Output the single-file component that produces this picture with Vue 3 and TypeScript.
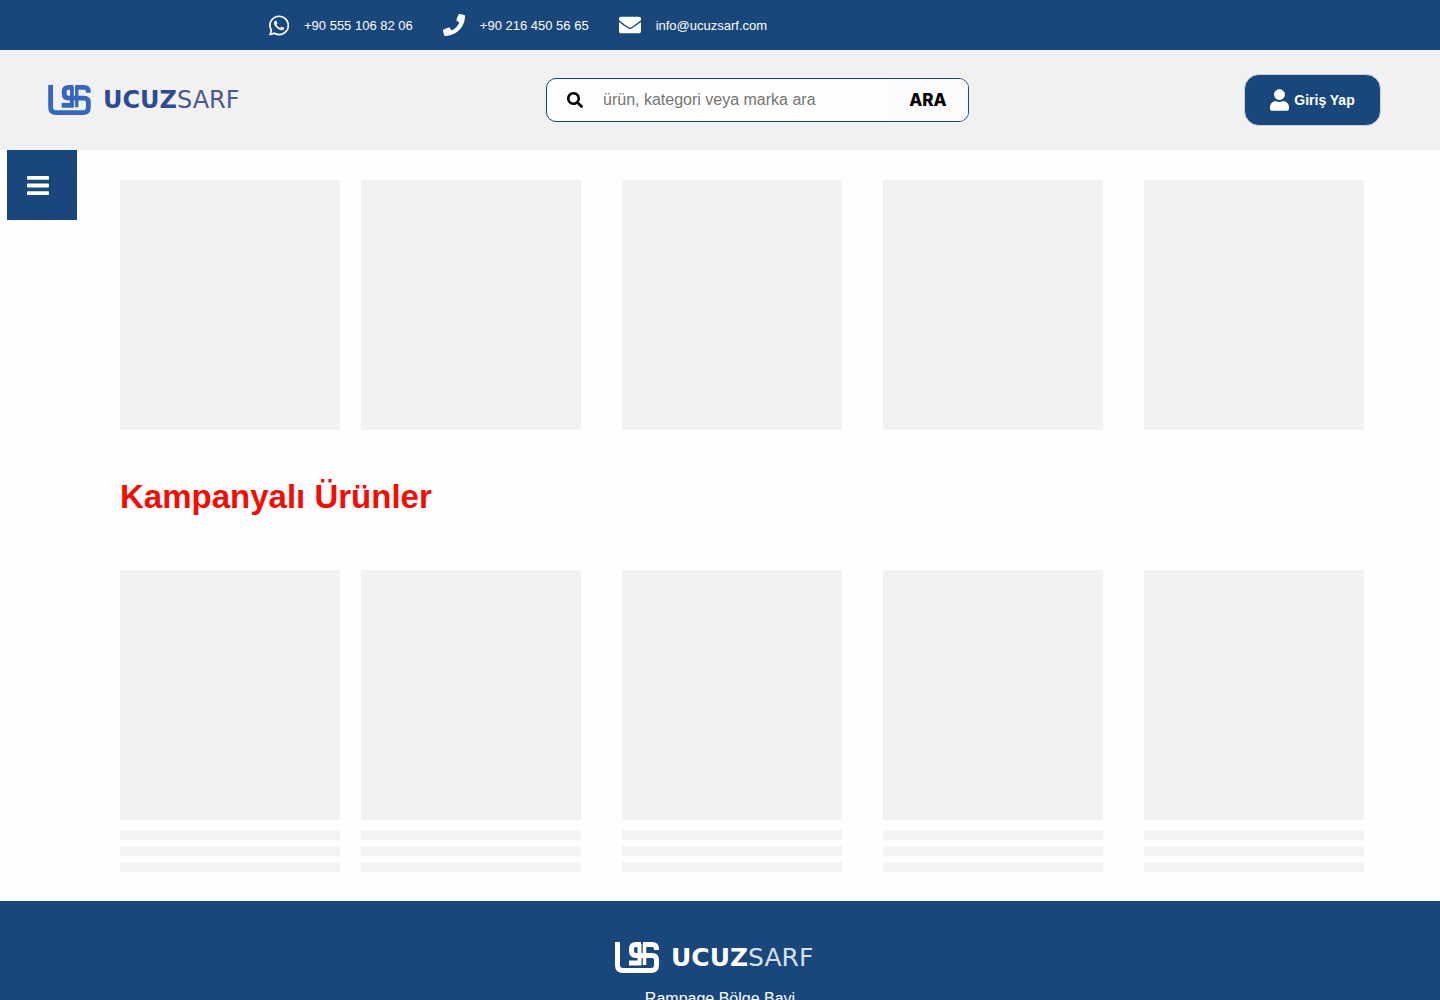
<script setup lang="ts">
import { ref } from 'vue'

const query = ref('')
const cards = [1, 2, 3, 4, 5]
</script>

<template>
  <div class="page">
    <div class="topbar">
      <a class="contact" href="https://wa.me/905551068206">
        <svg class="icon" viewBox="-24 0 448 512" width="22" height="23" aria-hidden="true">
          <path fill="currentColor" d="M380.900 97.100C339 55.100 283.200 32 223.900 32c-122.400 0-222 99.600-222 222 0 39.100 10.200 77.300 29.600 111L0 480l117.700-30.900c32.400 17.700 68.900 27 106.100 27h.1c122.300 0 224.100-99.600 224.100-222 0-59.300-25.200-115-67.100-157zm-157 341.600c-33.200 0-65.700-8.900-94-25.700l-6.700-4-69.800 18.300L72 359.200l-4.400-7c-18.500-29.400-28.200-63.300-28.200-98.200 0-101.700 82.800-184.500 184.600-184.500 49.300 0 95.600 19.200 130.400 54.100 34.800 34.900 56.200 81.200 56.100 130.500 0 101.800-84.900 184.600-186.600 184.600zm101.200-138.200c-5.500-2.800-32.800-16.200-37.900-18-5.100-1.900-8.800-2.800-12.500 2.800-3.700 5.600-14.300 18-17.600 21.800-3.200 3.700-6.500 4.200-12 1.400-32.600-16.300-54-29.100-75.500-66-5.700-9.800 5.700-9.100 16.300-30.300 1.800-3.700.9-6.900-.5-9.700-1.400-2.800-12.500-30.100-17.100-41.200-4.500-10.800-9.100-9.300-12.500-9.500-3.200-.2-6.900-.2-10.600-.2-3.700 0-9.700 1.400-14.800 6.900-5.100 5.600-19.400 19-19.400 46.300 0 27.300 19.900 53.700 22.600 57.400 2.800 3.700 39.100 59.700 94.800 83.800 35.200 15.200 49 16.500 66.600 13.900 10.700-1.600 32.800-13.400 37.400-26.400 4.600-13 4.600-24.100 3.200-26.400-1.300-2.500-5-3.900-10.500-6.600z" />
        </svg>
        <span>+90 555 106 82 06</span>
      </a>
      <a class="contact" href="tel:+902164505665">
        <svg class="icon" viewBox="0 0 512 512" width="22" height="22" aria-hidden="true">
          <path fill="currentColor" d="M493.400 24.600l-104-24c-11.300-2.600-22.900 3.300-27.500 13.900l-48 112c-4.200 9.800-1.400 21.300 6.900 28l60.600 49.600c-36 76.700-98.900 140.500-177.200 177.200l-49.600-60.600c-6.800-8.300-18.200-11.100-28-6.900l-112 48C3.900 366.500-2 378.100.6 389.400l24 104C27.100 504.200 36.700 512 48 512c256.100 0 464-207.500 464-464 0-11.200-7.700-20.900-18.600-23.400z" />
        </svg>
        <span>+90 216 450 56 65</span>
      </a>
      <a class="contact" href="mailto:info@ucuzsarf.com">
        <svg class="icon" viewBox="0 0 512 512" width="22" height="22" aria-hidden="true">
          <path fill="currentColor" d="M502.300 190.800c3.900-3.100 9.700-.2 9.700 4.700V400c0 26.500-21.500 48-48 48H48c-26.500 0-48-21.500-48-48V195.600c0-5 5.700-7.800 9.700-4.700 22.400 17.400 52.100 39.500 154.100 113.600 21.100 15.400 56.700 47.800 92.200 47.600 35.700.3 72-32.800 92.300-47.600 102-74.100 131.600-96.300 154-113.700zM256 320c23.200.4 56.600-29.200 73.400-41.400 132.700-96.300 142.800-104.700 173.400-128.700 5.800-4.500 9.200-11.500 9.200-18.900v-19c0-26.500-21.500-48-48-48H48c-26.500 0-48 21.500-48 48v19c0 7.400 3.400 14.300 9.200 18.900 30.600 23.900 40.700 32.400 173.400 128.700 16.800 12.200 50.200 41.800 73.400 41.400z" />
        </svg>
        <span>info@ucuzsarf.com</span>
      </a>
    </div>

    <header class="header">
      <a class="logo" href="/">
        <svg viewBox="0 0 44 31" width="43" height="30" fill="none" stroke="currentColor" stroke-width="5" aria-hidden="true">
          <path d="M2.500 0V23Q2.500 28.500 8 28.500H36Q41.500 28.500 41.500 23V18Q41.500 13.500 37 13.500H21Q16.500 13.500 16.500 9V7Q16.500 2.500 21 2.500H26" />
          <path d="M41.500 8V7Q41.500 2.500 37 2.500H28" />
          <path stroke-width="4" d="M24.500 2V23" />
          <path stroke-width="3.500" d="M29.500 2V23" />
          <path d="M14 21H26" />
        </svg>
        <span class="wordmark"><b>UCUZ</b>SARF</span>
      </a>
      <form class="search" role="search" @submit.prevent>
        <label class="search-label" for="query" aria-label="Ara">
          <svg viewBox="0 0 512 512" width="16" height="16" aria-hidden="true">
            <path fill="currentColor" d="M505 442.700L405.300 343c-4.500-4.500-10.600-7-17-7H372c27.600-35.300 44-79.700 44-128C416 93.100 322.900 0 208 0S0 93.100 0 208s93.100 208 208 208c48.300 0 92.700-16.400 128-44v16.300c0 6.400 2.500 12.500 7 17l99.700 99.700c9.400 9.400 24.600 9.400 33.900 0l28.300-28.300c9.400-9.400 9.400-24.600.1-34zM208 336c-70.700 0-128-57.200-128-128 0-70.700 57.200-128 128-128 70.700 0 128 57.200 128 128 0 70.700-57.200 128-128 128z" />
          </svg>
        </label>
        <input id="query" v-model="query" type="text" placeholder="ürün, kategori veya marka ara">
        <button type="submit">ARA</button>
      </form>
      <button class="login" type="button">
        <svg viewBox="0 0 448 512" width="19" height="22" aria-hidden="true">
          <path fill="currentColor" d="M224 256c70.700 0 128-57.300 128-128S294.700 0 224 0 96 57.300 96 128s57.300 128 128 128zm89.600 32h-16.700c-22.200 10.200-46.900 16-72.900 16s-50.600-5.800-72.900-16h-16.700C60.200 288 0 348.200 0 422.400V464c0 26.500 21.500 48 48 48h352c26.500 0 48-21.500 48-48v-41.600c0-74.200-60.200-134.400-134.400-134.400z" />
        </svg>
        <span>Giriş Yap</span>
      </button>
    </header>

    <div class="body">
      <button class="menu" type="button" aria-label="Menü">
        <svg viewBox="0 0 22 20" width="22" height="20" fill="currentColor" aria-hidden="true">
          <rect y="1" width="22" height="3.800" rx="0.800" />
          <rect y="8.600" width="22" height="3.800" rx="0.800" />
          <rect y="16.200" width="22" height="3.800" rx="0.800" />
        </svg>
      </button>
      <main class="content">
        <section class="row">
          <div v-for="n in cards" :key="n" class="card">
            <div class="picture"></div>
          </div>
        </section>
        <h1>Kampanyalı Ürünler</h1>
        <section class="row">
          <div v-for="n in cards" :key="n" class="card">
            <div class="picture"></div>
            <div class="line"></div>
            <div class="line"></div>
            <div class="line"></div>
          </div>
        </section>
      </main>
    </div>

    <footer class="footer">
      <a class="logo light" href="/">
        <svg viewBox="0 0 44 31" width="44" height="31" fill="none" stroke="currentColor" stroke-width="5" aria-hidden="true">
          <path d="M2.500 0V23Q2.500 28.500 8 28.500H36Q41.500 28.500 41.500 23V18Q41.500 13.500 37 13.500H21Q16.500 13.500 16.500 9V7Q16.500 2.500 21 2.500H26" />
          <path d="M41.500 8V7Q41.500 2.500 37 2.500H28" />
          <path stroke-width="4" d="M24.500 2V23" />
          <path stroke-width="3.500" d="M29.500 2V23" />
          <path d="M14 21H26" />
        </svg>
        <span class="wordmark"><b>UCUZ</b>SARF</span>
      </a>
      <p>Rampage Bölge Bayi</p>
    </footer>
  </div>
</template>

<style>
body {
  margin: 0;
}
</style>

<style scoped>
.page {
  font-family: "Liberation Sans", Arial, sans-serif;
  background: #fefefe;
}

.page * {
  box-sizing: border-box;
}

button {
  padding: 0;
  border: 0;
  font-family: inherit;
  cursor: pointer;
}

.topbar {
  display: flex;
  align-items: center;
  gap: 30px;
  height: 50px;
  padding-left: 267px;
  background: #19477b;
}

.contact {
  display: flex;
  align-items: center;
  gap: 15px;
  color: #fff;
  font-size: 13px;
  text-decoration: none;
}

.icon {
  overflow: visible;
}

.header {
  display: flex;
  align-items: center;
  justify-content: space-between;
  height: 100px;
  padding: 0 59px 0 48px;
  background: #f1f1f1;
}

.logo {
  display: flex;
  align-items: center;
  gap: 12px;
  width: 223px;
  color: #3766bd;
  text-decoration: none;
}

.wordmark {
  color: #4a5a90;
  font-family: "DejaVu Sans", sans-serif;
  font-size: 24px;
  font-weight: 400;
  line-height: 30px;
}

.wordmark b {
  color: #2c4b92;
  font-weight: 700;
}

.light {
  width: 210px;
  color: #fff;
}

.light .wordmark {
  color: #d5e0f0;
  font-size: 25px;
}

.light .wordmark b {
  color: #fff;
}

.search {
  display: flex;
  align-items: stretch;
  width: 423px;
  height: 44px;
  overflow: hidden;
  border: 1px solid #19477b;
  border-radius: 10px;
  background: #fefefe;
}

.search-label {
  display: flex;
  align-items: center;
  justify-content: center;
  width: 56px;
  color: #000;
}

.search input {
  flex: 1;
  min-width: 0;
  padding: 0;
  border: 0;
  outline: 0;
  background: transparent;
  font-family: inherit;
  font-size: 16px;
}

.search input::placeholder {
  color: #757575;
}

.search button {
  width: 80px;
  background: #fcfcfc;
  color: #000;
  font-family: Inter, sans-serif;
  font-size: 17px;
  font-weight: 800;
}

.login {
  display: flex;
  align-items: center;
  justify-content: center;
  gap: 5px;
  width: 137px;
  height: 52px;
  border: 1px solid #c9d3df;
  border-radius: 15px;
  background: #19477b;
  color: #fff;
  font-size: 14px;
  font-weight: 700;
}

.body {
  display: flex;
  align-items: flex-start;
  padding-left: 7px;
}

.menu {
  display: flex;
  align-items: center;
  width: 70px;
  height: 70px;
  padding-left: 20px;
  background: #19477b;
  color: #fff;
}

.content {
  flex: 1;
  padding: 30px 76px 29px 43px;
}

.row {
  display: flex;
  gap: 21px;
}

.card {
  flex: 1;
  display: flex;
  flex-direction: column;
  gap: 6px;
}

.card:nth-child(n + 3) {
  margin-left: 20px;
}

.picture {
  height: 250px;
  margin-bottom: 4px;
  background: #f2f2f2;
}

.line {
  height: 10px;
  background: #f3f3f3;
}

h1 {
  margin: 43px 0 53px;
  color: #f20d05;
  font-size: 33px;
  line-height: 40px;
}

.footer {
  display: flex;
  flex-direction: column;
  align-items: center;
  padding: 41px 0 24px;
  background: #19477b;
  color: #fff;
}

.footer p {
  margin: 16px 0 0;
  font-size: 16px;
  line-height: 20px;
}
</style>
